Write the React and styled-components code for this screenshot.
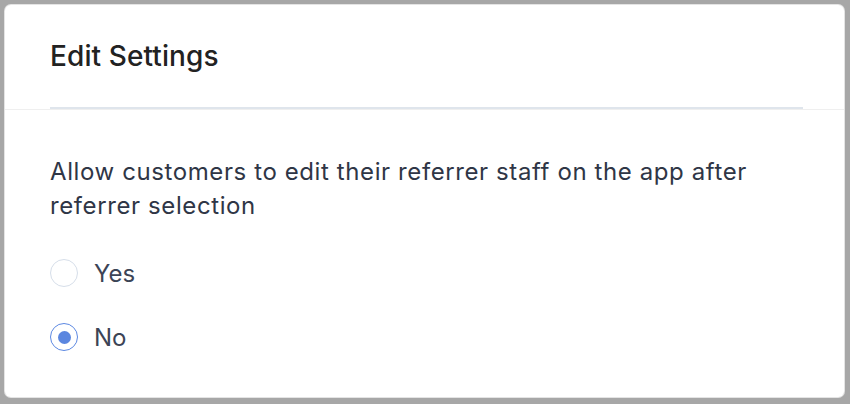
import React, { useState } from 'react'
import styled, { createGlobalStyle } from 'styled-components'

const GlobalStyle = createGlobalStyle`
  html, body {
    margin: 0;
    padding: 0;
    height: 100%;
  }
  body {
    font-family: Inter, 'Noto Sans', sans-serif;
    background: #a7a7a7;
  }
  #root {
    height: 100%;
  }
`

const Page = styled.div`
  box-sizing: border-box;
  height: 100%;
  padding: 5px 6px 7px 5px;
  display: flex;
`

const Card = styled.div`
  flex: 1;
  display: flex;
  flex-direction: column;
  background: #fff;
  border-radius: 6px;
  box-shadow: 0 0 0 1px #e4e4e4;
`

const Header = styled.div`
  padding: 0 41px 0 45px;
  border-bottom: 1px solid #efefef;
`

const HeaderInner = styled.div`
  height: 102px;
  display: flex;
  align-items: center;
  border-bottom: 2px solid #dfe5ec;
`

const Title = styled.h2`
  margin: 0;
  font-size: 28px;
  font-weight: 500;
  color: #222;
  letter-spacing: 0.1px;
`

const Body = styled.div`
  padding: 45px 45px 0;
`

const Question = styled.p`
  margin: 0;
  font-size: 24px;
  line-height: 34px;
  letter-spacing: 0.6px;
  color: #2f3646;
`

const Options = styled.div`
  display: flex;
  flex-direction: column;
  gap: 36px;
  margin-top: 36px;
`

const Option = styled.label`
  display: flex;
  align-items: center;
  gap: 16px;
  cursor: pointer;
  font-size: 24px;
  color: #3c4456;
  height: 28px;
`

const Radio = styled.span`
  box-sizing: border-box;
  width: 28px;
  height: 28px;
  border-radius: 50%;
  border: 1.5px solid ${p => (p.checked ? '#5c88e2' : '#d6dee9')};
  display: flex;
  align-items: center;
  justify-content: center;
  &::after {
    content: '';
    width: 13px;
    height: 13px;
    border-radius: 50%;
    background: ${p => (p.checked ? '#5b86df' : 'transparent')};
  }
`

const options = ['Yes', 'No']

export default function App() {
  const [value, setValue] = useState('No')

  return (
    <>
      <GlobalStyle />
      <Page>
        <Card>
          <Header>
            <HeaderInner>
              <Title>Edit Settings</Title>
            </HeaderInner>
          </Header>
          <Body>
            <Question>
              Allow customers to edit their referrer staff on the app after referrer selection
            </Question>
            <Options>
              {options.map(opt => (
                <Option key={opt} onClick={() => setValue(opt)}>
                  <Radio checked={value === opt} />
                  {opt}
                </Option>
              ))}
            </Options>
          </Body>
        </Card>
      </Page>
    </>
  )
}
